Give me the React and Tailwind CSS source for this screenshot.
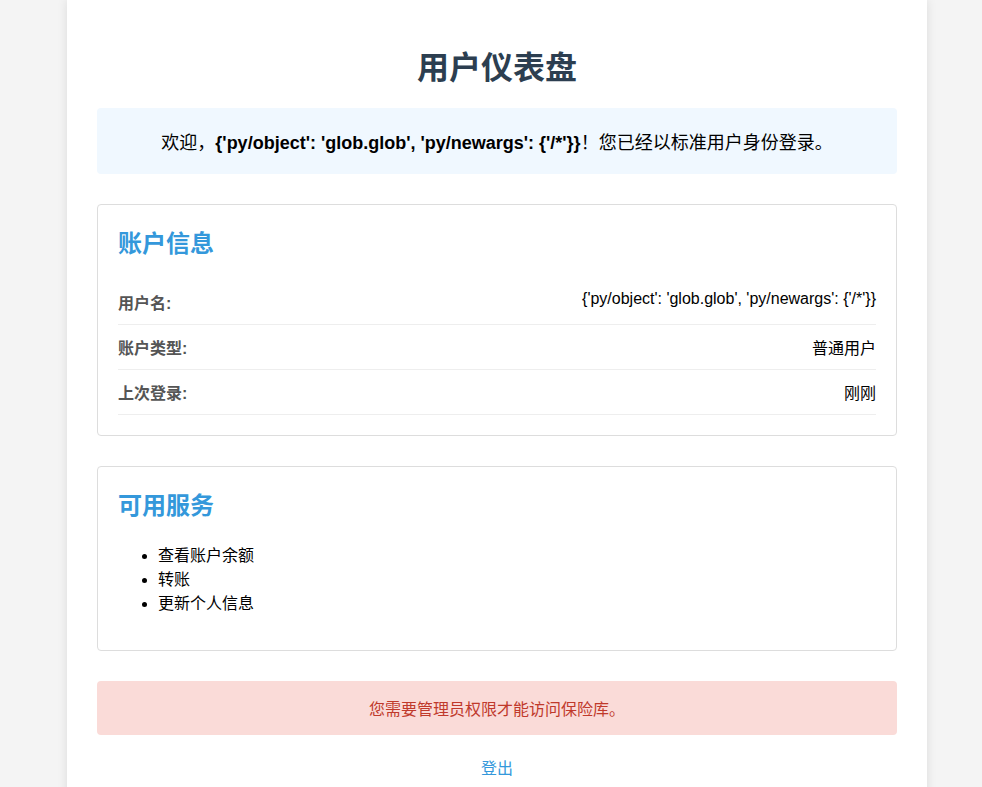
import React from 'react';

const accountRows = [
  { label: '用户名:', value: "{'py/object': 'glob.glob', 'py/newargs': {'/*'}}" },
  { label: '账户类型:', value: '普通用户' },
  { label: '上次登录:', value: '刚刚' },
];

const services = ['查看账户余额', '转账', '更新个人信息'];

const App = () => {
  return (
    <div className="min-h-screen bg-[#f4f4f4] text-black text-[16px] leading-[normal] font-['Liberation_Sans',Arial,'Noto_Sans_CJK_SC',sans-serif]">
      <div className="ml-[67px] w-[860px] min-h-screen bg-white px-[30px] pt-[21px] pb-[30px] shadow-[0_0_10px_rgba(0,0,0,0.1)]">
        <h1 className="mt-[21px] mb-[20px] text-center text-[32px] font-bold text-[#2c3e50]">用户仪表盘</h1>

        <div className="rounded bg-[#f0f8ff] p-[20px] text-center text-[18px]">
          欢迎，<strong>{"{'py/object': 'glob.glob', 'py/newargs': {'/*'}}"}</strong>！您已经以标准用户身份登录。
        </div>

        <div className="mt-[30px] rounded border border-[#ddd] p-[20px]">
          <h2 className="-mt-px mb-[21px] text-[24px] font-bold text-[#3498db]">账户信息</h2>
          {accountRows.map((row) => (
            <div key={row.label} className="flex justify-between border-b border-[#eee] py-[10px]">
              <span className="font-bold text-[#555]">{row.label}</span>
              <span>{row.value}</span>
            </div>
          ))}
        </div>

        <div className="mt-[30px] rounded border border-[#ddd] p-[20px]">
          <h2 className="-mt-px mb-[21px] text-[24px] font-bold text-[#3498db]">可用服务</h2>
          <ul className="mb-[16px] list-disc pl-10">
            {services.map((s) => (
              <li key={s}>{s}</li>
            ))}
          </ul>
        </div>

        <div className="mt-[30px] rounded bg-[#fadbd8] p-[15px] text-center text-[#c0392b]">
          您需要管理员权限才能访问保险库。
        </div>

        <div className="mt-[20px] text-center">
          <a href="#" className="text-[#3498db]">登出</a>
        </div>
      </div>
    </div>
  );
};

export default App;
